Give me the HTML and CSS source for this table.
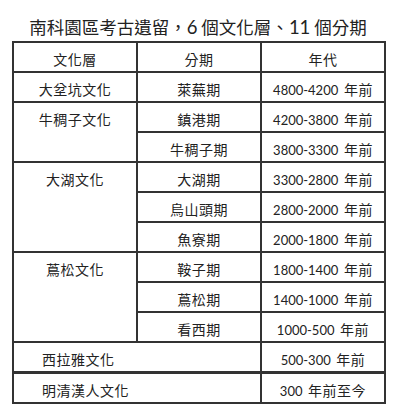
FILE: index.html
```html
<!DOCTYPE html>
<html lang="zh-Hant">
<head>
<meta charset="utf-8">
<link rel="stylesheet" href="styles.css">
</head>
<body>
<div class="page">
  <h1 class="title">南科園區考古遺留，<span class="num">6</span> 個文化層、<span class="num">11</span> 個分期</h1>
  <table class="grid">
    <colgroup><col class="c1"><col class="c2"><col class="c3"></colgroup>
    <tr class="head"><th>文化層</th><th>分期</th><th>年代</th></tr>
    <tr><td>大坌坑文化</td><td>萊蕪期</td><td class="yr"><span class="num">4800-4200</span> 年前</td></tr>
    <tr><td rowspan="2">牛稠子文化</td><td>鎮港期</td><td class="yr"><span class="num">4200-3800</span> 年前</td></tr>
    <tr><td>牛稠子期</td><td class="yr"><span class="num">3800-3300</span> 年前</td></tr>
    <tr><td rowspan="3">大湖文化</td><td>大湖期</td><td class="yr"><span class="num">3300-2800</span> 年前</td></tr>
    <tr><td>烏山頭期</td><td class="yr"><span class="num">2800-2000</span> 年前</td></tr>
    <tr><td>魚寮期</td><td class="yr"><span class="num">2000-1800</span> 年前</td></tr>
    <tr><td rowspan="3">蔦松文化</td><td>鞍子期</td><td class="yr"><span class="num">1800-1400</span> 年前</td></tr>
    <tr><td>蔦松期</td><td class="yr"><span class="num">1400-1000</span> 年前</td></tr>
    <tr><td>看西期</td><td class="yr"><span class="num">1000-500</span> 年前</td></tr>
    <tr><td colspan="2" class="wide">西拉雅文化</td><td class="yr"><span class="num">500-300</span> 年前</td></tr>
    <tr class="last"><td colspan="2" class="wide">明清漢人文化</td><td class="yr"><span class="num">300</span> 年前至今</td></tr>
  </table>
</div>
</body>
</html>
```
FILE: styles.css
```css
html, body {
  margin: 0;
  padding: 0;
  background: #ffffff;
}
body {
  font-family: "Noto Sans CJK TC", "Noto Sans CJK SC", sans-serif;
  color: #222222;
}
.page {
  width: 400px;
  padding-left: 12px;
  box-sizing: border-box;
}
.title {
  margin: 0;
  width: 372px;
  height: 41px;
  padding-top: 17px;
  box-sizing: border-box;
  font-size: 17.5px;
  line-height: 20px;
  font-weight: 400;
  text-align: center;
  letter-spacing: 0;
  white-space: nowrap;
}
.num {
  font-family: "Lato", "Liberation Sans", sans-serif;
  letter-spacing: 0;
}
.title .num {
  font-size: 18.5px;
}
.grid {
  border-collapse: collapse;
  width: 372px;
  table-layout: fixed;
}
.c1 { width: 124px; }
.c2 { width: 124px; }
.c3 { width: 124px; }
.grid th,
.grid td {
  border: 2px solid #333333;
  padding: 5px 0 0 0;
  height: 22px;
  line-height: 22px;
  font-size: 14px;
  font-weight: 400;
  letter-spacing: 0.5px;
  text-align: center;
  vertical-align: top;
  white-space: nowrap;
}
.grid .head th {
  height: 23px;
}
.grid td.wide {
  text-align: left;
  padding-left: 28px;
}
.grid td.yr .num {
  font-size: 13px;
  margin-right: 2px;
}
.grid tr.last td {
  border-top-width: 3px;
}
```
